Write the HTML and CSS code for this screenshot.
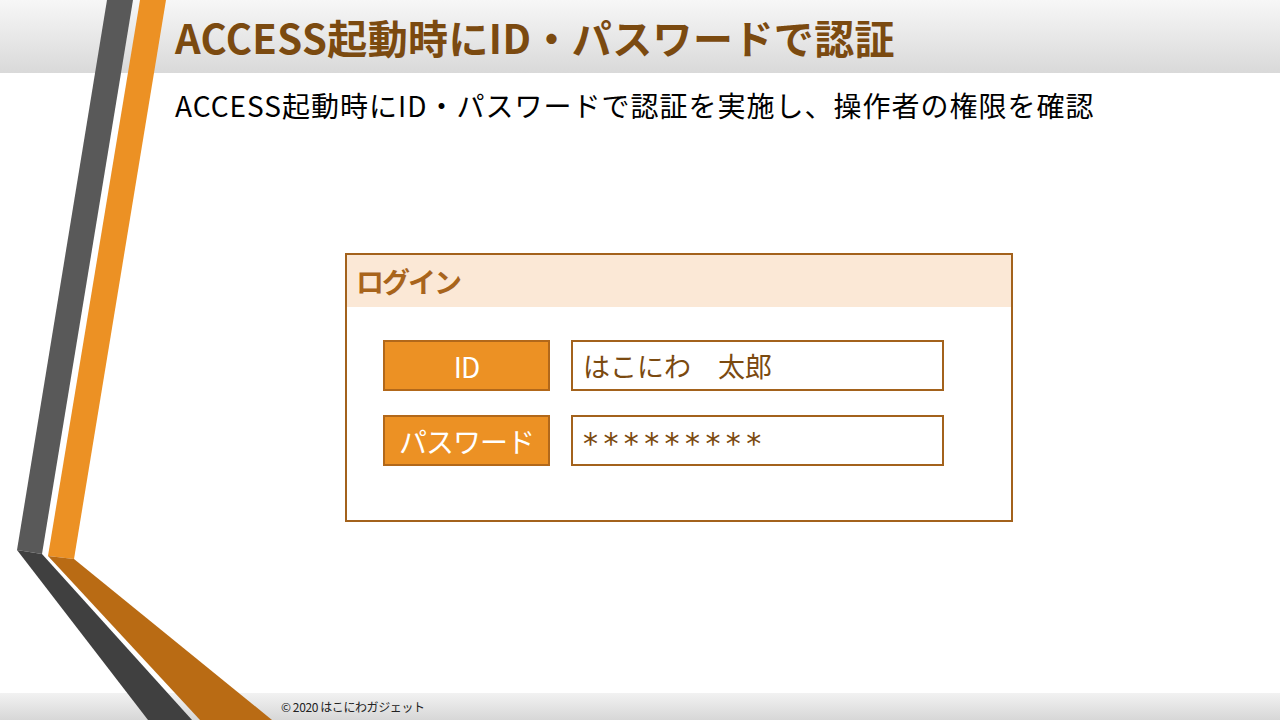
FILE: index.html
```html
<!DOCTYPE html>
<html>
<head>
  <meta charset="utf-8">
  <title>ACCESS起動時にID・パスワードで認証</title>
<link rel="stylesheet" href="styles.css">
</head>
<body>
  <svg class="deco" width="1280" height="720" viewBox="0 0 1280 720">
    <polygon fill="#595959" points="107,0 133,0 42,554 17,550"/>
    <polygon fill="#404040" points="17,550 42,554 192,720 148,720"/>
    <polygon fill="#ec9124" points="140,0 166,0 74,559 48,556"/>
    <polygon fill="#b96b14" points="48,556 74,559 272,720 200,720"/>
  </svg>
  <header class="title-bar">
    <h1>ACCESS起動時にID・パスワードで認証</h1>
  </header>
  <main>
    <p class="lead">ACCESS起動時にID・パスワードで認証を実施し、操作者の権限を確認</p>
    <div class="login">
      <div class="login-head">ログイン</div>
      <div class="login-body">
        <div class="field">
          <span class="label">ID</span>
          <span class="input">はこにわ　太郎</span>
        </div>
        <div class="field">
          <span class="label">パスワード</span>
          <span class="input secret">*********</span>
        </div>
      </div>
    </div>
  </main>
  <footer class="foot">© 2020 はこにわガジェット</footer>
</body>
</html>
```

FILE: styles.css
```css
html, body {
  margin: 0;
  width: 1280px;
  height: 720px;
  overflow: hidden;
}

body {
  position: relative;
  display: flex;
  flex-direction: column;
  background: #fff;
  font-family: 'Noto Sans CJK JP', 'Noto Sans', sans-serif;
}

.deco {
  position: absolute;
  left: 0;
  top: 0;
  z-index: 2;
}

.title-bar {
  height: 73px;
  padding-left: 175px;
  display: flex;
  align-items: center;
  background: linear-gradient(to bottom, #f7f7f7, #d9d9d9);
}

.title-bar h1 {
  margin: 0;
  font-size: 40px;
  font-weight: 700;
  color: #7b4a10;
  letter-spacing: 0.4px;
}

main {
  flex: 1;
  padding-left: 175px;
}

.lead {
  margin: 12px 0 0;
  font-size: 28px;
  line-height: 40px;
  color: #000;
  letter-spacing: 1px;
}

.login {
  margin: 128px 0 0 170px;
  width: 664px;
  height: 265px;
  border: 2px solid #a3621c;
}

.login-head {
  height: 52px;
  padding-left: 9px;
  display: flex;
  align-items: center;
  background: #fbe8d6;
  color: #a8641c;
  font-size: 28px;
  font-weight: 700;
  letter-spacing: -2px;
}

.login-body {
  padding: 33px 0 0 36px;
  display: flex;
  flex-direction: column;
  gap: 24px;
}

.field {
  display: flex;
  gap: 21px;
}

.label {
  width: 163px;
  height: 47px;
  border: 2px solid #b2681a;
  background: #ec9124;
  color: #fff;
  font-size: 28px;
  display: flex;
  align-items: center;
  justify-content: center;
  letter-spacing: -1px;
}

.input {
  width: 359px;
  height: 47px;
  padding-left: 10px;
  border: 2px solid #a3621c;
  color: #7b4a10;
  font-size: 27px;
  display: flex;
  align-items: center;
}

.input.secret {
  font-family: 'DejaVu Sans', sans-serif;
  font-size: 30px;
  letter-spacing: 5.4px;
  padding-top: 6px;
  height: 41px;
}

.foot {
  height: 27px;
  padding-left: 281px;
  display: flex;
  align-items: center;
  font-size: 12px;
  color: #222;
  letter-spacing: -0.4px;
  background: linear-gradient(to bottom, #f2f2f2, #d7d7d7);
}
```
